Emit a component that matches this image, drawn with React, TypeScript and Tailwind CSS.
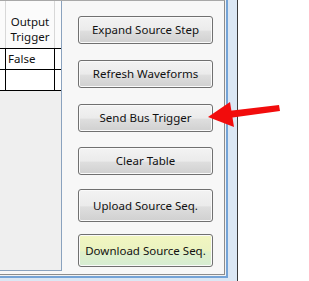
import React from "react";

const font = { fontFamily: '"Noto Sans", "Open Sans", sans-serif' };

function Btn({ label, h, mt, green }: { label: string; h: string; mt: string; green?: boolean }) {
  return (
    <div
      className={`${mt} ${h} w-[135px] flex items-center justify-center rounded-[3px] border border-[#707070] text-[11.5px] text-[#111] shadow-[inset_0_0_0_1px_#fafafa] ${
        green
          ? "bg-[linear-gradient(to_bottom,#f2f6c0_0%,#ebf3c1_50%,#e0f0c8_55%,#d6edd4_100%)]"
          : "bg-[linear-gradient(to_bottom,#f3f3f3_0%,#ebebeb_50%,#dedede_55%,#d0d0d0_100%)]"
      }`}
    >
      {label}
    </div>
  );
}

export default function App() {
  return (
    <div className="relative w-[309px] h-[281px] bg-white overflow-hidden flex" style={font}>
      {/* window frame */}
      <div className="w-[238px] h-[281px] bg-[#dbe7f4] border-r border-[#3a3a3a]">
        <div className="w-[228px] h-[278px] border-r-2 border-b-2 border-[#74a3d6]">
          <div className="w-[226px] h-[276px] border-r border-b border-[#f2f2f2]">
            <div className="w-[225px] h-[275px] bg-[#f7f7f7] border-t border-r border-b border-t-[#a8a8a8] border-r-[#8c8c8c] border-b-[#8c8c8c] flex">
              {/* grid panel */}
              <div className="w-[62px] h-[270px] border-r border-b border-[#8aa2be] bg-[#efefef] flex flex-col">
                <div className="h-[47px] bg-[#fbfbfb] flex">
                  <div className="w-[6px] border-r border-[#d8d8d8]" />
                  <div className="w-[49px] border-r border-[#d8d8d8] flex flex-col items-center pt-[13px] text-[11.5px] leading-[15px] text-[#111]">
                    <span>Output</span>
                    <span>Trigger</span>
                  </div>
                  <div className="flex-1" />
                </div>
                <div className="h-[22px] bg-white border-t border-b border-black flex">
                  <div className="w-[6px] border-r border-black" />
                  <div className="w-[49px] border-r border-black pl-[2px] text-[11.5px] leading-[20px] text-[#111]">False</div>
                  <div className="flex-1" />
                </div>
                <div className="h-[21px] bg-white border-b border-black flex">
                  <div className="w-[6px] border-r border-black" />
                  <div className="w-[49px] border-r border-black" />
                  <div className="flex-1" />
                </div>
              </div>
              {/* buttons */}
              <div className="flex flex-col pl-[16px] pt-[15px]">
                <Btn label="Expand Source Step" h="h-[28px]" mt="mt-0" />
                <Btn label="Refresh Waveforms" h="h-[28px]" mt="mt-[16px]" />
                <Btn label="Send Bus Trigger" h="h-[28px]" mt="mt-[16px]" />
                <Btn label="Clear Table" h="h-[28px]" mt="mt-[15px]" />
                <Btn label="Upload Source Seq." h="h-[33px]" mt="mt-[14px]" />
                <Btn label="Download Source Seq." h="h-[33px]" mt="mt-[12px]" green />
              </div>
            </div>
          </div>
        </div>
      </div>
      {/* red arrow annotation */}
      <svg className="absolute left-0 top-0" width="309" height="281" viewBox="0 0 309 281">
        <polygon points="228,111 279,105 280,111 229,118" fill="#f20c0c" />
        <polygon points="208,117 230,102 234,127" fill="#f20c0c" />
      </svg>
    </div>
  );
}
